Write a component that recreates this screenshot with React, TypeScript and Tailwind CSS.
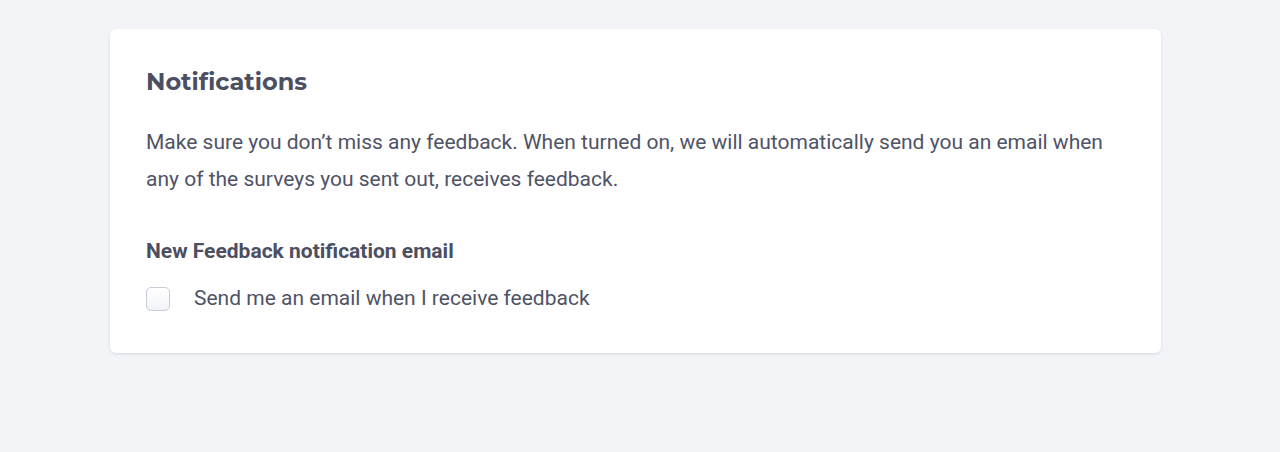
import React from "react";

export default function App() {
  return (
    <div className="min-h-[452px] w-full bg-[#f3f4f8] pt-[29px]" style={{ fontFamily: "Roboto, 'Liberation Sans', sans-serif" }}>
      <div className="ml-[110px] w-[1051px] rounded-[6px] bg-white px-[36px] pb-[36px] pt-[37px] shadow-[0_1px_3px_rgba(20,25,60,0.12)]">
        <h2 className="text-[24px] font-bold leading-[32px] text-[#4b4f61]" style={{ fontFamily: "Montserrat, 'Open Sans', sans-serif" }}>
          Notifications
        </h2>
        <p className="mt-[26px] text-[21px] leading-[37px] text-[#4f5366]">
          Make sure you don’t miss any feedback. When turned on, we will automatically send you an email when
          <br />
          any of the surveys you sent out, receives feedback.
        </p>
        <div className="mt-[39px] text-[21px] font-bold leading-[28px] text-[#4b4f61]">New Feedback notification email</div>
        <label className="mt-[16px] flex h-[36px] items-center">
          <span className="h-[24px] w-[24px] rounded-[5px] border border-[#c9cbd9] bg-gradient-to-b from-white to-[#f2f3f8]" />
          <span className="ml-[24px] text-[21px] text-[#4f5366]">Send me an email when I receive feedback</span>
        </label>
      </div>
    </div>
  );
}
